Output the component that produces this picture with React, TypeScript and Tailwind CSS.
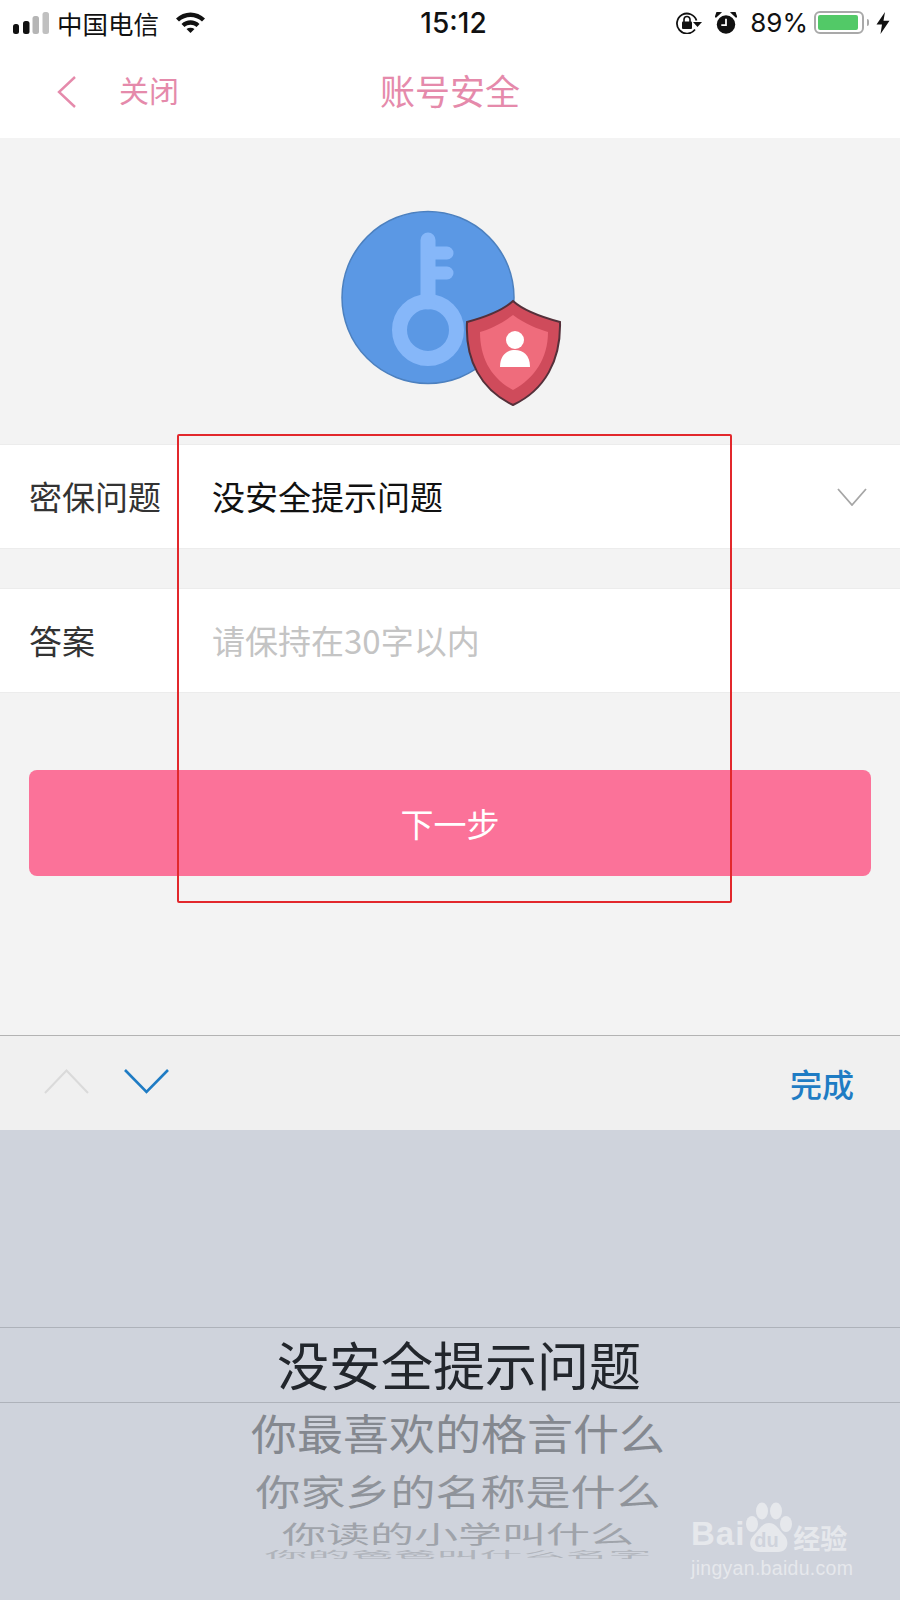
import { Fragment } from "react"

const cjk = "font-['Noto_Sans_CJK_SC','Noto_Sans',sans-serif]"

function SignalBars() {
    return (
        <svg width="36" height="22" viewBox="0 0 36 22" className="shrink-0">
            <rect x="0" y="12" width="6" height="10" rx="2.5" fill="#111" />
            <rect x="10" y="9" width="6.5" height="13" rx="2.5" fill="#111" />
            <rect x="19.5" y="4" width="6.5" height="18" rx="2.5" fill="#b5b5b5" />
            <rect x="29.5" y="0" width="6.5" height="22" rx="2.5" fill="#c0c0c0" />
        </svg>
    )
}

function Wifi() {
    return (
        <svg width="29" height="21" viewBox="0 0 29 21" className="shrink-0">
            <path d="M0 6.5 C8 -1.5 21 -1.5 29 6.5 L26 9.5 C19.5 3.5 9.5 3.5 3 9.5 Z" fill="#111" />
            <path d="M5.5 12 C10.5 7 18.5 7 23.5 12 L20.5 15 C17 12 12 12 8.5 15 Z" fill="#111" />
            <path d="M10.5 17 C13 15.2 16 15.2 18.5 17 L14.5 21 Z" fill="#111" />
        </svg>
    )
}

function RotationLock() {
    return (
        <svg width="26" height="22" viewBox="0 0 26 22" className="shrink-0">
            <path d="M19 17.5 A10 10 0 1 1 20.5 8.5" fill="none" stroke="#111" strokeWidth="1.8" />
            <path d="M17 10 L26 10 L21.5 15 Z" fill="#111" />
            <rect x="6" y="9.5" width="10" height="7.5" rx="1" fill="#111" />
            <path d="M8 10 V7.5 A3 3 0 0 1 14 7.5 V10" fill="none" stroke="#111" strokeWidth="1.6" />
        </svg>
    )
}

function Alarm() {
    return (
        <svg width="22" height="22" viewBox="0 0 21 21" className="shrink-0">
            <circle cx="10.5" cy="12" r="8.8" fill="#111" />
            <path d="M0.5 5 L5 0.8 L2 0.5 Z M20.5 5 L16 0.8 L19 0.5 Z" fill="#111" stroke="#111" strokeWidth="1.5" />
            <path d="M10.5 6.5 V12.5 H6" fill="none" stroke="#fff" strokeWidth="1.7" />
        </svg>
    )
}

function Battery() {
    return (
        <div className="flex items-center shrink-0">
            <div className="w-[50px] h-[23px] rounded-[6px] border-2 border-[#a9a9a9] p-[2px]">
                <div className="w-[40px] h-full rounded-[2px] bg-[#52c967]" />
            </div>
            <div className="w-[2px] h-[7px] ml-[3px] bg-[#a9a9a9] rounded-r-sm" />
        </div>
    )
}

function Bolt() {
    return (
        <svg width="14" height="22" viewBox="0 0 14 24" preserveAspectRatio="none" className="shrink-0">
            <path d="M9 0 L0.5 13.5 H6 L4.5 24 L13.5 9.5 H7.5 Z" fill="#111" />
        </svg>
    )
}

function StatusBar() {
    return (
        <div className={`h-[45px] bg-white flex items-center justify-between pl-[13px] pr-[10px] text-[#111] ${cjk}`}>
            <div className="flex-1 flex items-center">
                <SignalBars />
                <span className="ml-[8px] text-[25.5px] leading-none">中国电信</span>
                <span className="ml-[17px]"><Wifi /></span>
            </div>
            <span className="ml-[4px] font-['Inter',sans-serif] font-medium text-[28px] leading-none">15:12</span>
            <div className="flex-1 flex items-center justify-end">
                <RotationLock />
                <span className="ml-[13px]"><Alarm /></span>
                <span className="ml-[13px] mr-[6px] font-['Inter',sans-serif] text-[26px] leading-none">89%</span>
                <Battery />
                <span className="ml-[7px]"><Bolt /></span>
            </div>
        </div>
    )
}

function NavBar() {
    return (
        <div className={`h-[93px] bg-white grid grid-cols-3 items-center text-[#e58aab] ${cjk}`}>
            <div className="flex items-center pl-[57px]">
                <svg width="20" height="32" viewBox="0 0 20 32">
                    <path d="M18 1 L2 16 L18 31" fill="none" stroke="#e58aab" strokeWidth="2.4" />
                </svg>
                <span className="ml-[42px] mb-[5px] text-[30px] leading-none">关闭</span>
            </div>
            <div className="text-center mb-[4px] text-[35px] leading-none">账号安全</div>
            <div />
        </div>
    )
}

function KeyBadge() {
    return (
        <svg width="260" height="230" viewBox="0 0 260 230" className="mx-auto">
            <circle cx="108" cy="107.5" r="86" fill="#5b98e4" stroke="#4c80bf" strokeWidth="1.5" />
            <circle cx="108" cy="140" r="28.5" fill="none" stroke="#86b7f9" strokeWidth="15" />
            <path d="M108 50 V112" stroke="#86b7f9" strokeWidth="15" strokeLinecap="round" />
            <path d="M112 63 H127 M112 83 H127" stroke="#86b7f9" strokeWidth="13" strokeLinecap="round" />
            <path d="M193 111 C205 122 225 128 240 132 C241 170 225 200 193 215 C161 200 145 170 147 132 C162 128 181 122 193 111 Z" fill="#cf4b5b" stroke="#55303a" strokeWidth="2" />
            <path d="M193 125 C205 134 218 139 228 142 C228 168 215 188 193 200 C171 188 160 168 160 142 C170 139 181 134 193 125 Z" fill="#ef6c7c" />
            <circle cx="195" cy="150" r="9" fill="#fff" />
            <path d="M180 177 C180 165 187 160 195 160 C203 160 210 165 210 177 Z" fill="#fff" />
        </svg>
    )
}

function FormRow({ label, value, placeholder, chevron }: { label: string; value?: string; placeholder?: string; chevron?: boolean }) {
    return (
        <div className="h-[105px] bg-white border-y border-[#ececec] flex items-center pl-[29px] pr-[33px] text-[33px] leading-none">
            <span className="w-[183px] text-[#333]">{label}</span>
            {value && <span className="flex-1 text-[#111]">{value}</span>}
            {placeholder && <span className="flex-1 text-[#c4c4c4]">{placeholder}</span>}
            {chevron && (
                <svg width="30" height="18" viewBox="0 0 30 18">
                    <path d="M1 1 L15 17 L29 1" fill="none" stroke="#a6a6a6" strokeWidth="1.8" />
                </svg>
            )}
        </div>
    )
}

function Toolbar() {
    return (
        <div className="h-[95px] bg-[#f0f0f0] border-t border-[#b3b3b3] flex items-center pl-[44px] pr-[46px]">
            <svg width="45" height="25" viewBox="0 0 45 25" className="mb-[4px]">
                <path d="M1 24 L22.5 1.5 L44 24" fill="none" stroke="#dadada" strokeWidth="2" />
            </svg>
            <svg width="45" height="25" viewBox="0 0 45 25" className="ml-[35px] mb-[4px]">
                <path d="M1 1 L22.5 23 L44 1" fill="none" stroke="#1f7cc4" strokeWidth="2.6" />
            </svg>
            <span className="ml-auto text-[32px] leading-none font-medium text-[#1f7cc4]">完成</span>
        </div>
    )
}

const pickerRows = [
    { text: "你最喜欢的格言什么", cls: "h-[58px] text-[46px] text-[#84888f] scale-y-[0.92]" },
    { text: "你家乡的名称是什么", cls: "h-[58px] text-[45px] text-[#8f939a] scale-y-[0.82]" },
    { text: "你读的小学叫什么", cls: "h-[28px] text-[44px] text-[#9fa3aa] scale-y-[0.55]" },
    { text: "你的爸爸叫什么名字", cls: "h-[14px] text-[43px] text-[#b0b4bb] scale-y-[0.2]" },
]

function Picker() {
    return (
        <div className="relative flex-1 bg-[#cfd3dc] pt-[197px] overflow-hidden">
            <div className="h-[76px] pb-[3px] pl-[18px] border-y border-[#aeb2ba] flex items-center justify-center text-[52px] leading-none text-[#22262c]">
                没安全提示问题
            </div>
            <div className="pl-[16px]">
                {pickerRows.map(row => (
                    <Fragment key={row.text}>
                        <div className={`flex items-center justify-center leading-none ${row.cls}`}>{row.text}</div>
                    </Fragment>
                ))}
            </div>
            <Watermark />
        </div>
    )
}

function Watermark() {
    return (
        <div className="absolute left-[691px] top-[372px] w-[170px] text-[#e6e8ec]">
            <div className="flex items-end h-[56px]">
                <span className="font-['Liberation_Sans',sans-serif] font-bold text-[33px] leading-none tracking-[1px] mb-[8px]">Bai</span>
                <div className="relative w-[48px] h-[56px] -ml-[1px]">
                    <svg width="48" height="56" viewBox="0 0 48 56" className="absolute left-0 top-0">
                        <ellipse cx="8" cy="22" rx="6" ry="8" fill="#e6e8ec" />
                        <ellipse cx="18" cy="9" rx="6" ry="8.5" fill="#e6e8ec" />
                        <ellipse cx="32" cy="9" rx="6" ry="8.5" fill="#e6e8ec" />
                        <ellipse cx="42" cy="22" rx="6" ry="8" fill="#e6e8ec" />
                        <path d="M25 21 C32 21 35 28 40 33 C46 39 44 50 34 50 H16 C6 50 3 40 10 33 C15 28 18 21 25 21 Z" fill="#e6e8ec" />
                    </svg>
                    <span className="absolute left-[10px] top-[28px] font-['Liberation_Sans',sans-serif] font-bold text-[20px] leading-none text-[#cfd3dc]">du</span>
                </div>
                <span className="ml-[1px] text-[27px] leading-none font-bold mb-[7px] whitespace-nowrap">经验</span>
            </div>
            <div className="mt-[1px] font-['Liberation_Sans',sans-serif] text-[19.5px] leading-none tracking-[0.3px] whitespace-nowrap">jingyan.baidu.com</div>
        </div>
    )
}

export default function App() {
    return (
        <div className={`relative w-[900px] h-[1600px] flex flex-col overflow-hidden bg-[#f3f3f3] ${cjk}`}>
            <StatusBar />
            <NavBar />

            {/* Main form */}
            <div className="h-[897px] pt-[52px]">
                <KeyBadge />
                <div className="mt-[24px]">
                    <FormRow label="密保问题" value="没安全提示问题" chevron />
                    <div className="mt-[39px]">
                        <FormRow label="答案" placeholder="请保持在30字以内" />
                    </div>
                </div>
                <button className="block mt-[77px] mx-[29px] w-[842px] h-[106px] rounded-lg bg-[#fb7299] text-white text-[33px] leading-none">
                    下一步
                </button>
            </div>

            <Toolbar />
            <Picker />

            {/* red annotation drawn over the screenshot */}
            <div className="absolute left-[177px] top-[434px] w-[555px] h-[469px] border-2 border-[#e2282c] rounded-[2px] pointer-events-none" />
        </div>
    )
}
